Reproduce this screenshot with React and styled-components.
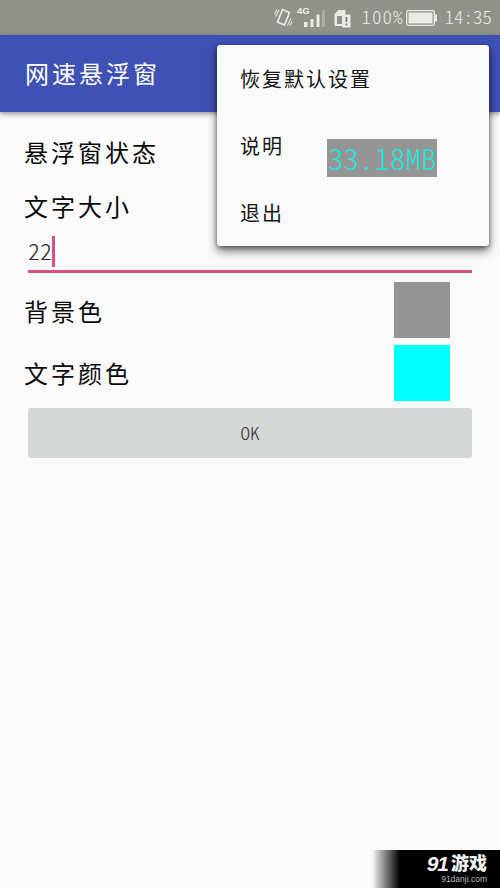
import React from 'react';
import styled, { createGlobalStyle } from 'styled-components';

const GlobalStyle = createGlobalStyle`
  * {
    box-sizing: border-box;
  }
  body {
    margin: 0;
    background: #fafafa;
    font-family: 'Liberation Sans', 'Noto Sans CJK SC', sans-serif;
  }
`;

const Screen = styled.div`
  position: relative;
  display: flex;
  flex-direction: column;
  width: 500px;
  height: 888px;
  overflow: hidden;
  background: #fafafa;
`;
const StatusBar = styled.div`
  flex: none;
  display: flex;
  align-items: center;
  justify-content: flex-end;
  height: 35px;
  padding-right: 8px;
  background: #90918a;
  color: #e9e9e6;
`;
const StatusIcons = styled.svg`
  display: block;
  margin-right: 9px;
`;
const Battery = styled.svg`
  display: block;
  margin: 0 7px 0 3px;
`;
const MonoText = styled.span`
  display: inline-block;
  padding-bottom: ${props => props.$lift || 2}px;
  font-family: 'Noto Sans CJK SC', monospace;
  font-size: ${props => props.$size}px;
  font-weight: 300;
  font-feature-settings: 'hwid';
  line-height: 1;
  letter-spacing: ${props => props.$spacing || 0}px;
  transform: scaleY(0.93);
  white-space: nowrap;
`;
const AppBar = styled.header`
  flex: none;
  display: flex;
  align-items: center;
  height: 77px;
  padding: 0 25px 2px;
  background: #3f51b5;
  box-shadow: 0 2px 5px rgba(0, 0, 0, 0.4);
  z-index: 1;
`;
const Title = styled.h1`
  margin: 0;
  color: #fff;
  font-size: 24px;
  font-weight: 400;
  letter-spacing: 3px;
`;
const Settings = styled.main`
  display: flex;
  flex-direction: column;
  padding-top: 15px;
`;
const Row = styled.div`
  display: flex;
  align-items: center;
  justify-content: space-between;
  height: ${props => props.$height}px;
  padding: 0 50px 0 24px;
`;
const Label = styled.span`
  padding-top: ${props => props.$drop || 1}px;
  color: #0a0a0a;
  font-size: 24px;
  font-weight: 400;
  line-height: 30px;
  letter-spacing: 3px;
`;
const Field = styled.div`
  display: flex;
  align-items: flex-end;
  height: 39px;
  margin: 0 28px 6px;
  padding-bottom: 3px;
  border-bottom: 3px solid #d85080;
  color: #2b2b2b;
`;
const FieldValue = styled.div`
  display: flex;
  align-items: center;
  height: 31px;
`;
const Caret = styled.span`
  width: 3px;
  height: 31px;
  background: #d85080;
`;
const Swatch = styled.span`
  width: 56px;
  height: 56px;
  background: ${props => props.$color};
`;
const OkButton = styled.button`
  height: 50px;
  margin: 4px 28px 0;
  padding: 0;
  border: 0;
  border-radius: 3px;
  background: #d5d7d6;
  color: #303131;
`;
const Menu = styled.nav`
  position: absolute;
  top: 45px;
  left: 217px;
  z-index: 2;
  display: flex;
  flex-direction: column;
  width: 272px;
  height: 201px;
  border-radius: 3px;
  background: #fafafa;
  box-shadow: 0 5px 10px rgba(0, 0, 0, 0.55), 0 1px 4px rgba(0, 0, 0, 0.4);
`;
const MenuItem = styled.a`
  flex: 1;
  display: flex;
  align-items: center;
  padding-left: 23px;
  color: #151515;
  font-size: 20px;
  font-weight: 400;
  letter-spacing: 2px;
`;
const SpeedWindow = styled.div`
  position: absolute;
  top: 139px;
  left: 327px;
  z-index: 3;
  display: flex;
  align-items: center;
  width: 110px;
  height: 38px;
  padding: 2px 0 0 1px;
  background: #959595;
  color: #1ee8df;
`;
const Watermark = styled.div`
  position: absolute;
  right: 0;
  bottom: 0;
  display: flex;
  flex-direction: column;
  align-items: flex-end;
  width: 128px;
  height: 38px;
  padding: 5px 13px 0 0;
  background: linear-gradient(90deg, rgba(0, 0, 0, 0), #000 28px);
  color: #f2f2f2;
`;
const WatermarkLogo = styled.div`
  display: flex;
  align-items: center;
  height: 18px;
  font-size: 18px;
  font-weight: 900;
  line-height: 18px;
`;
const LogoNumber = styled.span`
  margin-right: 3px;
  font-size: 21px;
  font-style: italic;
  letter-spacing: -1px;
`;
const WatermarkSite = styled.div`
  color: #bbb;
  font-size: 8.5px;
  line-height: 13px;
`;

const colorRows = [
  { label: '背景色', color: '#959595', height: 62 },
  { label: '文字颜色', color: '#00ffff', height: 63 }
];

const menuItems = ['恢复默认设置', '说明', '退出'];

function StatusGlyphs() {
  return (
    <StatusIcons width="78" height="24" viewBox="0 0 78 24" fill="none">
      {/* vibrate */}
      <g stroke="#e9e9e6" strokeLinejoin="round">
        <path d="M8.5 3.5L15.5 6.5L10.5 19L3.5 16Z" strokeWidth="1.7" />
        <path d="M5 4L1.5 10.5M3 3.5L0.5 8M17 12.5L13.5 19.5M18 15.5L16 19.5" strokeWidth="1.1" />
      </g>
      {/* mobile signal */}
      <text x="23" y="8" fill="#f0f0ed" fontFamily="Liberation Sans" fontSize="9.5" fontWeight="bold">4G</text>
      <g fill="#e9e9e6">
        <path d="M30 16h3.5v5H30zM36.500 13h3v8h-3zM42.500 8.500h3v12.500h-3z" />
        <path d="M48 4h3v17h-3z" fillOpacity="0.3" />
      </g>
      {/* sim card */}
      <path d="M60.500 8L64.500 4H71.500V8.500H76.500V21.500H68V20H60.500Z" fill="#e9e9e6" />
      <path d="M63 10H68V18H63Z" fill="#90918a" />
      <path d="M72.500 11v5M72.500 17.500v2" stroke="#777870" strokeWidth="1.7" />
    </StatusIcons>
  );
}

export default function App() {
  return (
    <>
      <GlobalStyle />
      <Screen>
        <StatusBar>
          <StatusGlyphs />
          <MonoText $size={19} $spacing={1}>100%</MonoText>
          <Battery width="31" height="16" viewBox="0 0 31 16">
            <rect x="0.7" y="0.7" width="27.6" height="14.6" rx="1.5" fill="none" stroke="#e9e9e6" strokeWidth="1.3" />
            <rect x="2.5" y="2.5" width="24" height="11" fill="#e9e9e6" />
            <rect x="29" y="4.5" width="2" height="7" fill="#e9e9e6" />
          </Battery>
          <MonoText $size={19}>14:35</MonoText>
        </StatusBar>
        <AppBar>
          <Title>网速悬浮窗</Title>
        </AppBar>
        <Settings>
          <Row $height={53}>
            <Label>悬浮窗状态</Label>
          </Row>
          <Row $height={54}>
            <Label>文字大小</Label>
          </Row>
          <Field>
            <FieldValue>
              <MonoText $size={24}>22</MonoText>
              <Caret />
            </FieldValue>
          </Field>
          {colorRows.map(row => (
            <Row key={row.label} $height={row.height}>
              <Label $drop={5}>{row.label}</Label>
              <Swatch $color={row.color} />
            </Row>
          ))}
          <OkButton>
            <MonoText $size={19} $lift={1}>OK</MonoText>
          </OkButton>
        </Settings>
        <Menu>
          {menuItems.map(item => (
            <MenuItem key={item}>{item}</MenuItem>
          ))}
        </Menu>
        <SpeedWindow>
          <MonoText $size={31} $lift={4}>33.18MB</MonoText>
        </SpeedWindow>
        <Watermark>
          <WatermarkLogo>
            <LogoNumber>91</LogoNumber>
            游戏
          </WatermarkLogo>
          <WatermarkSite>91danji.com</WatermarkSite>
        </Watermark>
      </Screen>
    </>
  );
}
